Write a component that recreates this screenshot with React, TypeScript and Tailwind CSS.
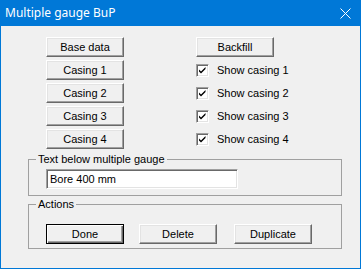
import React from "react";

const btn =
  "h-[20px] w-[78px] flex items-center justify-center bg-[#f0f0f0] border border-t-white border-l-white border-r-[#696969] border-b-[#696969] shadow-[inset_-1px_-1px_#a0a0a0,inset_1px_1px_#e3e3e3] leading-none";

const defBtn =
  "h-[20px] w-[78px] flex items-center justify-center bg-[#f0f0f0] border border-black shadow-[inset_1px_1px_#ffffff,inset_-1px_-1px_#696969,inset_-2px_-2px_#a0a0a0] leading-none";

function Check({ label }: { label: string }) {
  return (
    <div className="h-[20px] flex items-center">
      <div className="w-[13px] h-[13px] bg-white border border-t-[#a0a0a0] border-l-[#a0a0a0] border-r-white border-b-white shadow-[inset_1px_1px_#696969,inset_-1px_-1px_#e3e3e3] flex items-center justify-center">
        <svg width="9" height="9" viewBox="0 0 9 9" className="block">
          <path d="M1 3.5 L3 5.5 L7.5 1 L7.5 3 L3 7.5 L1 5.5 Z" fill="#000" />
        </svg>
      </div>
      <span className="ml-[8px] leading-none">{label}</span>
    </div>
  );
}

export default function App() {
  return (
    <div className="w-[361px] h-[269px] flex flex-col bg-[#0078d7] px-px pb-px">
      <div className="h-[26px] shrink-0 flex items-center justify-between pl-[4px] pr-[9px] text-white text-[12px] font-['Noto_Sans',sans-serif]">
        <span className="leading-none">Multiple gauge BuP</span>
        <svg width="11" height="11" viewBox="0 0 11 11" className="block">
          <path d="M0.5 0.5 L10.5 10.5 M10.5 0.5 L0.5 10.5" stroke="#fff" strokeWidth="1" />
        </svg>
      </div>
      <div className="flex-1 bg-[#f0f0f0] pl-[27px] pt-[11px] font-['Liberation_Sans',Arial,sans-serif] text-[11px] text-black">
        <div className="flex pl-[18px]">
          <div className="flex flex-col gap-[3px]">
            <div className={btn}>Base data</div>
            <div className={btn}>Casing 1</div>
            <div className={btn}>Casing 2</div>
            <div className={btn}>Casing 3</div>
            <div className={btn}>Casing 4</div>
          </div>
          <div className="flex flex-col gap-[3px] ml-[72px]">
            <div className={btn}>Backfill</div>
            <Check label="Show casing 1" />
            <Check label="Show casing 2" />
            <Check label="Show casing 3" />
            <Check label="Show casing 4" />
          </div>
        </div>
        <fieldset className="mt-[4px] w-[314px] border border-[#a0a0a0]">
          <legend className="ml-[7px] px-[2px] leading-[13px]">Text below multiple gauge</legend>
          <div className="pl-[17px] pt-[3px] pb-[6px]">
            <div className="h-[20px] w-[192px] bg-white border border-t-[#a0a0a0] border-l-[#a0a0a0] border-r-white border-b-white shadow-[inset_1px_1px_#696969,inset_-1px_-1px_#e3e3e3] flex items-center pl-[3px] leading-none">
              Bore 400 mm
            </div>
          </div>
        </fieldset>
        <fieldset className="mt-[2px] w-[314px] border border-[#a0a0a0]">
          <legend className="ml-[7px] px-[2px] leading-[13px]">Actions</legend>
          <div className="flex pl-[17px] pt-[13px] pb-[4px]">
            <div className={defBtn}>Done</div>
            <div className={btn + " ml-[15px]"}>Delete</div>
            <div className={btn + " ml-[17px]"}>Duplicate</div>
          </div>
        </fieldset>
      </div>
    </div>
  );
}
